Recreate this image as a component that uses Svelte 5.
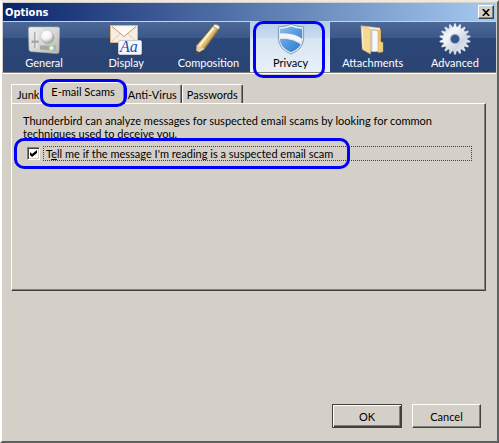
<script lang="ts">
  const panes = ["General", "Display", "Composition", "Privacy", "Attachments", "Advanced"];
  const tabs = ["Junk", "E-mail Scams", "Anti-Virus", "Passwords"];

  let pane = $state("Privacy");
  let tab = $state("E-mail Scams");
  let warnOnScam = $state(true);

  // gear outline for the Advanced icon
  const teeth = 18;
  const gear = Array.from({ length: teeth * 4 }, (_, i) => {
    const a = ((i - 0.5) / (teeth * 4)) * Math.PI * 2;
    const r = i % 4 < 2 ? 15.5 : 12.2;
    return `${(16 + r * Math.sin(a)).toFixed(2)},${(16 - r * Math.cos(a)).toFixed(2)}`;
  }).join(" ");
</script>

{#snippet icon(name: string)}
  <svg class="icon" viewBox="0 0 32 32" aria-hidden="true">
    {#if name === "General"}
      <defs>
        <linearGradient id="plate" x1="0" y1="0" x2="1" y2="1">
          <stop offset="0" stop-color="#f2f2f0" />
          <stop offset="0.5" stop-color="#d8d8d6" />
          <stop offset="1" stop-color="#b4b4b2" />
        </linearGradient>
        <radialGradient id="knob" cx="0.4" cy="0.3" r="0.75">
          <stop offset="0" stop-color="#fff" />
          <stop offset="0.6" stop-color="#f2f2f2" />
          <stop offset="1" stop-color="#a5a5a5" />
        </radialGradient>
      </defs>
      <path d="M2 4h28q1.500 0 1.500 1.500l-.5 23q0 2-2 2l-26-2q-2-.3-2-2L.5 6Q.5 4 2 4z" fill="url(#plate)" stroke="#b9b9b7" stroke-width=".6" />
      <path d="M7 9v16" stroke="#909090" stroke-width="1.200" />
      <path d="M8.200 9v16" stroke="#f8f8f8" stroke-width="1" />
      <path d="M3.500 17.500h7v2.500h-7z" fill="#a8a8a8" />
      <circle cx="19.800" cy="14.500" r="6.500" fill="#a4a4a4" />
      <circle cx="18.800" cy="13.300" r="6.200" fill="url(#knob)" stroke="#c4c4c4" stroke-width=".6" />
      <path d="M12 22.500h15.500v5L12 26.500z" fill="#a5a7a2" />
      <circle cx="23.500" cy="25" r="2.500" fill="#b9ecae" />
      <circle cx="23.500" cy="25" r="1.300" fill="#e8ffe0" />
    {:else if name === "Display"}
      <path d="M.5 2.500h27v17H.5z" fill="#f8ede2" stroke="#d6b58f" />
      <path d="M1.500 18.500l9-8M26.500 18.500l-9-8" stroke="#e3cbb3" stroke-width="1" />
      <path d="M2 3.500l12 10 12-10" fill="#fffaf4" stroke="#b89878" stroke-width="1" />
      <rect x="8.500" y="17.500" width="23" height="14" rx="1.500" fill="#f5f7fb" stroke="#c4ccda" />
      <text class="glyph" x="10" y="29">Aa</text>
    {:else if name === "Composition"}
      <path d="M22.500 1.200q3.500 0 5.500 3.100L12.500 26 4 31l.8-9z" fill="#dcbc7c" stroke="#6a5332" stroke-width=".8" />
      <path d="M21.800 4.500L7 23.500" stroke="#fff0bd" stroke-width="2.400" />
      <path d="M26.200 6L12 25.500" stroke="#a8864a" stroke-width="1.500" />
      <path d="M4.800 22l7.700 4L4 31z" fill="#e2cfae" />
      <path d="M4.400 27.500l2.800 1.800L3.700 31.300z" fill="#443a33" />
      <path d="M22.500 1.200q3.500 0 5.500 3.100l-1.600 2.200-5.500-3z" fill="#f3efe7" stroke="#81705b" stroke-width=".5" />
    {:else if name === "Privacy"}
      <defs>
        <linearGradient id="shield" x1="0" y1="0" x2="1" y2="1">
          <stop offset="0" stop-color="#a5cbec" />
          <stop offset="0.4" stop-color="#62a4e4" />
          <stop offset="1" stop-color="#1b6dc7" />
        </linearGradient>
        <clipPath id="shield-face">
          <path d="M16 3.500q6 2.300 11.200 2.300v9.500q0 9.500-11.200 14Q4.800 24.800 4.800 15.300V5.800Q10 5.800 16 3.500z" />
        </clipPath>
      </defs>
      <path d="M16 1.300Q21.500 3.800 28.600 3.800v11.500Q28.300 26.300 16 31 3.700 26.300 3.400 15.300V3.800Q10.500 3.800 16 1.300z" fill="#edf2f7" stroke="#7f9bb3" stroke-width="1" />
      <g clip-path="url(#shield-face)">
        <path d="M0 0h32v32H0z" fill="url(#shield)" />
        <path d="M3 10.500Q20 9 29 17.500v6.500Q19 14 3 16z" fill="#f4f5f6" />
        <path d="M3 15.500Q19 13.500 29 23.500" stroke="#dde3e9" stroke-width="1" fill="none" />
      </g>
    {:else if name === "Attachments"}
      <path d="M12 5.500l12 1.500v21l-9 1z" fill="#e1b963" />
      <path d="M13 6.500h6v22h-6z" fill="#c9d5e5" />
      <path d="M15 7l6.500 1v20.500H15z" fill="#f4f7fb" stroke="#9eacc1" stroke-width=".5" />
      <path d="M21 7l2 .5v11l3 1v9.500l-5 .5z" fill="#efd08b" stroke="#c79948" stroke-width=".5" />
      <path d="M4 2.800l9.500 3V31L5.300 26.500z" fill="#f5d999" stroke="#d8b16a" stroke-width=".6" />
      <path d="M4 2.800L23 5v2.500l-9.500-1.200z" fill="#fff0c8" stroke="#dcb976" stroke-width=".5" />
      <path d="M5.200 5l1 20" stroke="#fff3d0" stroke-width="1" />
    {:else}
      <defs>
        <linearGradient id="metal" x1="0" y1="0" x2="1" y2="1">
          <stop offset="0" stop-color="#cbd4df" />
          <stop offset="0.35" stop-color="#f4f6f9" />
          <stop offset="0.65" stop-color="#cfd8e2" />
          <stop offset="1" stop-color="#f1f4f8" />
        </linearGradient>
      </defs>
      <polygon points={gear} fill="url(#metal)" stroke="#bdc8d6" stroke-width=".3" />
      <circle cx="16" cy="16" r="5.500" fill="#bcc7d5" />
      <circle cx="16" cy="16" r="4.300" fill="#37578c" />
    {/if}
  </svg>
{/snippet}

<div class="window" role="dialog" aria-label="Options">
  <header class="titlebar">
    <h1>Options</h1>
    <button class="close" aria-label="Close">
      <svg viewBox="0 0 8 7" aria-hidden="true"><path d="M.8 0l6.400 7M7.200 0L.8 7" stroke="#000" stroke-width="1.600" /></svg>
    </button>
  </header>

  <nav class="toolbar">
    {#each panes as name}
      <button class="pane" class:selected={pane === name} onclick={() => (pane = name)}>
        {@render icon(name)}
        <span>{name}</span>
        {#if name === "Privacy"}<i class="ring ring-pane"></i>{/if}
      </button>
    {/each}
  </nav>

  <main>
    <div class="tabs" role="tablist">
      {#each tabs as name}
        <button class="tab" class:active={tab === name} role="tab" aria-selected={tab === name} onclick={() => (tab = name)}>
          {name}
          {#if name === "E-mail Scams"}<i class="ring ring-tab"></i>{/if}
        </button>
      {/each}
    </div>

    <section class="panel" role="tabpanel">
      <p>Thunderbird can analyze messages for suspected email scams by looking for common techniques used to deceive you.</p>
      <div class="option">
        <input id="warn" type="checkbox" bind:checked={warnOnScam} />
        <label for="warn">T<u>e</u>ll me if the message I'm reading is a suspected email scam</label>
        <i class="ring ring-option"></i>
      </div>
    </section>
  </main>

  <footer>
    <button class="action default">OK</button>
    <button class="action">Cancel</button>
  </footer>
</div>

<style>
  :global(body) {
    margin: 0;
  }
  .window {
    box-sizing: border-box;
    min-height: 100vh;
    display: flex;
    flex-direction: column;
    padding: 1px 1px 0 1px;
    border: 2px solid;
    border-color: #ece9e3 #606060 #606060 #fff;
    background: #d4d0c8;
    color: #000;
    font-family: Lato, sans-serif;
    font-size: 11px;
    line-height: 13px;
  }
  button {
    font: inherit;
    color: inherit;
    padding: 0;
    margin: 0;
    border: 0;
    background: none;
  }
  .titlebar {
    display: flex;
    align-items: center;
    justify-content: space-between;
    height: 18px;
    padding: 0 2px;
    border-bottom: 1px solid #d4d0c8;
    background: linear-gradient(to right, #0a246a, #a6caf0);
  }
  h1 {
    margin: 0;
    font-family: "DejaVu Sans Condensed", "DejaVu Sans", sans-serif;
    font-size: 11px;
    font-weight: 700;
    color: #fff;
  }
  .close {
    display: flex;
    align-items: center;
    justify-content: center;
    width: 16px;
    height: 14px;
    background: #d4d0c8;
    border: 1px solid;
    border-color: #fff #404040 #404040 #fff;
    box-shadow: inset -1px -1px #808080;
  }
  .close svg {
    width: 8px;
    height: 7px;
  }
  .toolbar {
    display: flex;
    height: 50px;
    background: linear-gradient(#4c6897, #3b5888 32%, #2b4777 33%, #2a4473);
    border-bottom: 1px solid #808080;
    box-shadow: 0 1px #fff;
  }
  .pane {
    position: relative;
    flex: 1;
    display: flex;
    flex-direction: column;
    align-items: center;
    margin-right: 2px;
    padding-left: 2px;
    color: #fff;
  }
  .pane.selected {
    background: linear-gradient(#b7cde8, #cbdcef 32%, #d9e5f3 33%, #e9f0f8);
    color: #000;
  }
  .icon {
    width: 32px;
    height: 32px;
    margin: 1px 0;
    flex: none;
  }
  .glyph {
    font: italic 16px "Liberation Serif", serif;
    fill: #234fae;
  }
  main {
    padding: 9px 10px 0 8px;
  }
  .tabs {
    position: relative;
    z-index: 1;
    display: flex;
    align-items: flex-end;
  }
  .tab {
    position: relative;
    height: 19px;
    padding: 0 4px;
    border-top: 1px solid #fff;
    border-left: 1px solid #fff;
    border-right: 1px solid #404040;
    border-radius: 2px 2px 0 0;
    box-shadow: inset -1px 0 #808080;
    background: #d4d0c8;
  }
  .tab:first-child {
    border-right: 0;
    box-shadow: none;
    padding-left: 5px;
  }
  .tab.active {
    z-index: 1;
    height: 22px;
    padding: 0 9px 4px;
    margin: 0 -2px -1px;
  }
  .panel {
    box-sizing: border-box;
    min-height: 188px;
    padding: 10px 11px;
    border: 1px solid;
    border-color: #fff #404040 #404040 #fff;
    box-shadow: inset -1px -1px #808080;
  }
  p {
    margin: 0 0 6px;
    max-width: 430px;
  }
  .option {
    position: relative;
    display: flex;
    align-items: center;
    gap: 3px;
    margin-right: 2px;
    padding-left: 4px;
  }
  input {
    appearance: none;
    box-sizing: border-box;
    flex: none;
    width: 13px;
    height: 13px;
    margin: 0;
    padding: 2px;
    border: 1px solid;
    border-color: #808080 #fff #fff #808080;
    box-shadow: inset 1px 1px #404040, inset -1px -1px #d4d0c8;
    background: #fff;
  }
  input:checked::before {
    content: "";
    display: block;
    width: 7px;
    height: 7px;
    background: #000;
    clip-path: polygon(0 29%, 29% 58%, 100% 0, 100% 42%, 29% 100%, 0 71%);
  }
  label {
    flex: 1;
    padding: 0 2px;
    border: 1px dotted #404040;
  }
  footer {
    display: flex;
    justify-content: flex-end;
    gap: 10px;
    margin-top: auto;
    padding: 12px 15px 13px;
  }
  .action {
    box-sizing: border-box;
    width: 69px;
    height: 24px;
    border: 1px solid;
    border-color: #fff #404040 #404040 #fff;
    box-shadow: inset -1px -1px #808080;
  }
  .action.default {
    width: 70px;
    border-color: #404040;
    box-shadow: inset 1px 1px #fff, inset -1px -1px #404040, inset -2px -2px #808080;
  }
  .ring {
    position: absolute;
    z-index: 2;
    border: 3px solid #0000f5;
    border-radius: 10px;
    pointer-events: none;
  }
  .ring-pane {
    inset: -1px 5px -6px 3px;
  }
  .ring-tab {
    inset: -4px -3px -3px -2px;
  }
  .ring-option {
    inset: -8px 122px -8px -9px;
  }
</style>
